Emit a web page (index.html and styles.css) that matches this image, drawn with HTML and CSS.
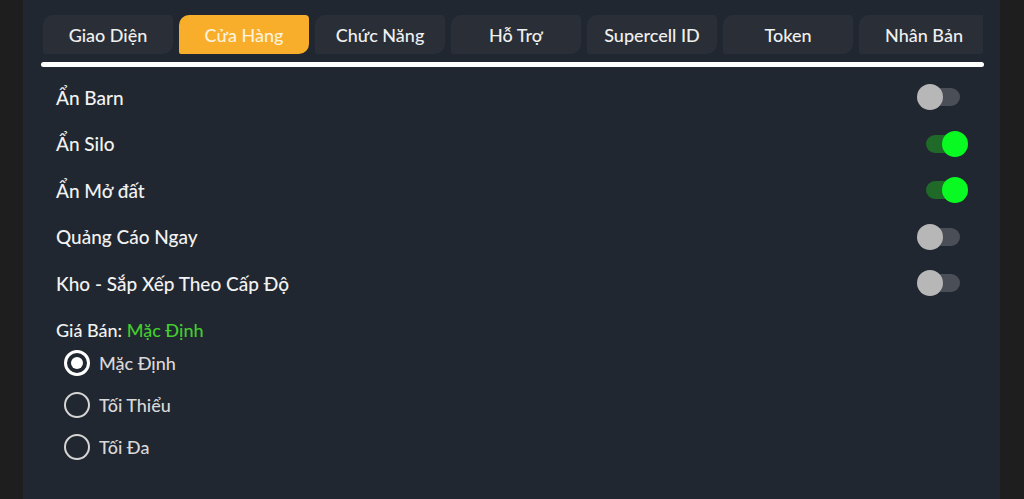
FILE: index.html
```html
<!DOCTYPE html>
<html lang="vi">
<head>
<meta charset="utf-8">
<title>Cửa Hàng</title>
<link rel="stylesheet" href="styles.css">
</head>
<body>
<div class="panel">
  <div class="tabs">
    <div class="tab">Giao Diện</div>
    <div class="tab active">Cửa Hàng</div>
    <div class="tab">Chức Năng</div>
    <div class="tab">Hỗ Trợ</div>
    <div class="tab">Supercell ID</div>
    <div class="tab">Token</div>
    <div class="tab">Nhân Bản</div>
  </div>
  <div class="divider"></div>
  <div class="rows">
    <div class="row"><span>Ẩn Barn</span><div class="toggle"><div class="track"></div><div class="knob"></div></div></div>
    <div class="row"><span>Ẩn Silo</span><div class="toggle on"><div class="track"></div><div class="knob"></div></div></div>
    <div class="row"><span>Ẩn Mở đất</span><div class="toggle on"><div class="track"></div><div class="knob"></div></div></div>
    <div class="row"><span>Quảng Cáo Ngay</span><div class="toggle"><div class="track"></div><div class="knob"></div></div></div>
    <div class="row"><span>Kho - Sắp Xếp Theo Cấp Độ</span><div class="toggle"><div class="track"></div><div class="knob"></div></div></div>
  </div>
  <div class="price-label">Giá Bán: <span class="green">Mặc Định</span></div>
  <div class="radios">
    <div class="radio-row"><div class="radio checked"></div><span>Mặc Định</span></div>
    <div class="radio-row"><div class="radio"></div><span>Tối Thiểu</span></div>
    <div class="radio-row"><div class="radio"></div><span>Tối Đa</span></div>
  </div>
</div>
</body>
</html>
```
FILE: styles.css
```css
html, body {
  margin: 0;
  padding: 0;
  background: #1e1e1f;
  height: 499px;
  overflow: hidden;
}
body {
  font-family: "Lato", "Noto Sans", sans-serif;
  color: #f2f2f2;
}
.panel {
  margin-left: 23px;
  width: 977px;
  height: 499px;
  background: #212730;
  padding-top: 15px;
  box-sizing: border-box;
}
.tabs {
  display: flex;
  gap: 6px;
  margin-left: 20px;
  width: 940px;
  height: 39px;
  overflow: hidden;
}
.tab {
  flex: 0 0 130px;
  height: 39px;
  background: #2a2f37;
  border-radius: 10px 4px 10px 2px;
  display: flex;
  align-items: center;
  justify-content: center;
  font-size: 18px;
  font-weight: 500;
  color: #f0f0f0;
}
.tab.active {
  background: #f9ae2b;
  color: #fdf3dc;
}
.divider {
  margin: 8px 0 0 18px;
  width: 943px;
  height: 5px;
  background: #ffffff;
  border-radius: 3px;
}
.rows {
  margin-top: 7px;
  padding-left: 33px;
  padding-right: 32px;
}
.row {
  height: 46.5px;
  display: flex;
  align-items: center;
  justify-content: space-between;
  font-size: 19px;
  font-weight: 500;
}
.toggle {
  position: relative;
  width: 51px;
  height: 26px;
}
.track {
  position: absolute;
  left: 9px;
  top: 4px;
  width: 34px;
  height: 18px;
  border-radius: 9px;
  background: #4a4e57;
}
.knob {
  position: absolute;
  left: 0;
  top: 0;
  width: 26px;
  height: 26px;
  border-radius: 50%;
  background: #b7b7b7;
}
.toggle.on .track {
  background: #1f6a28;
}
.toggle.on .knob {
  left: 25px;
  background: #08fa22;
}
.price-label {
  margin-top: 11px;
  padding-left: 33px;
  height: 24px;
  line-height: 24px;
  font-size: 18px;
  font-weight: 500;
}
.green {
  color: #43cc2e;
}
.radios {
  padding-left: 41px;
}
.radio-row {
  height: 42px;
  display: flex;
  align-items: center;
  gap: 9px;
  font-size: 18px;
  font-weight: 500;
  color: #d9d9d9;
}
.radio {
  width: 26px;
  height: 26px;
  box-sizing: border-box;
  border: 2px solid #d5d5d5;
  border-radius: 50%;
  display: flex;
  align-items: center;
  justify-content: center;
}
.radio.checked {
  border: 3px solid #ffffff;
}
.radio.checked::after {
  content: "";
  width: 12px;
  height: 12px;
  border-radius: 50%;
  background: #ffffff;
}
```
